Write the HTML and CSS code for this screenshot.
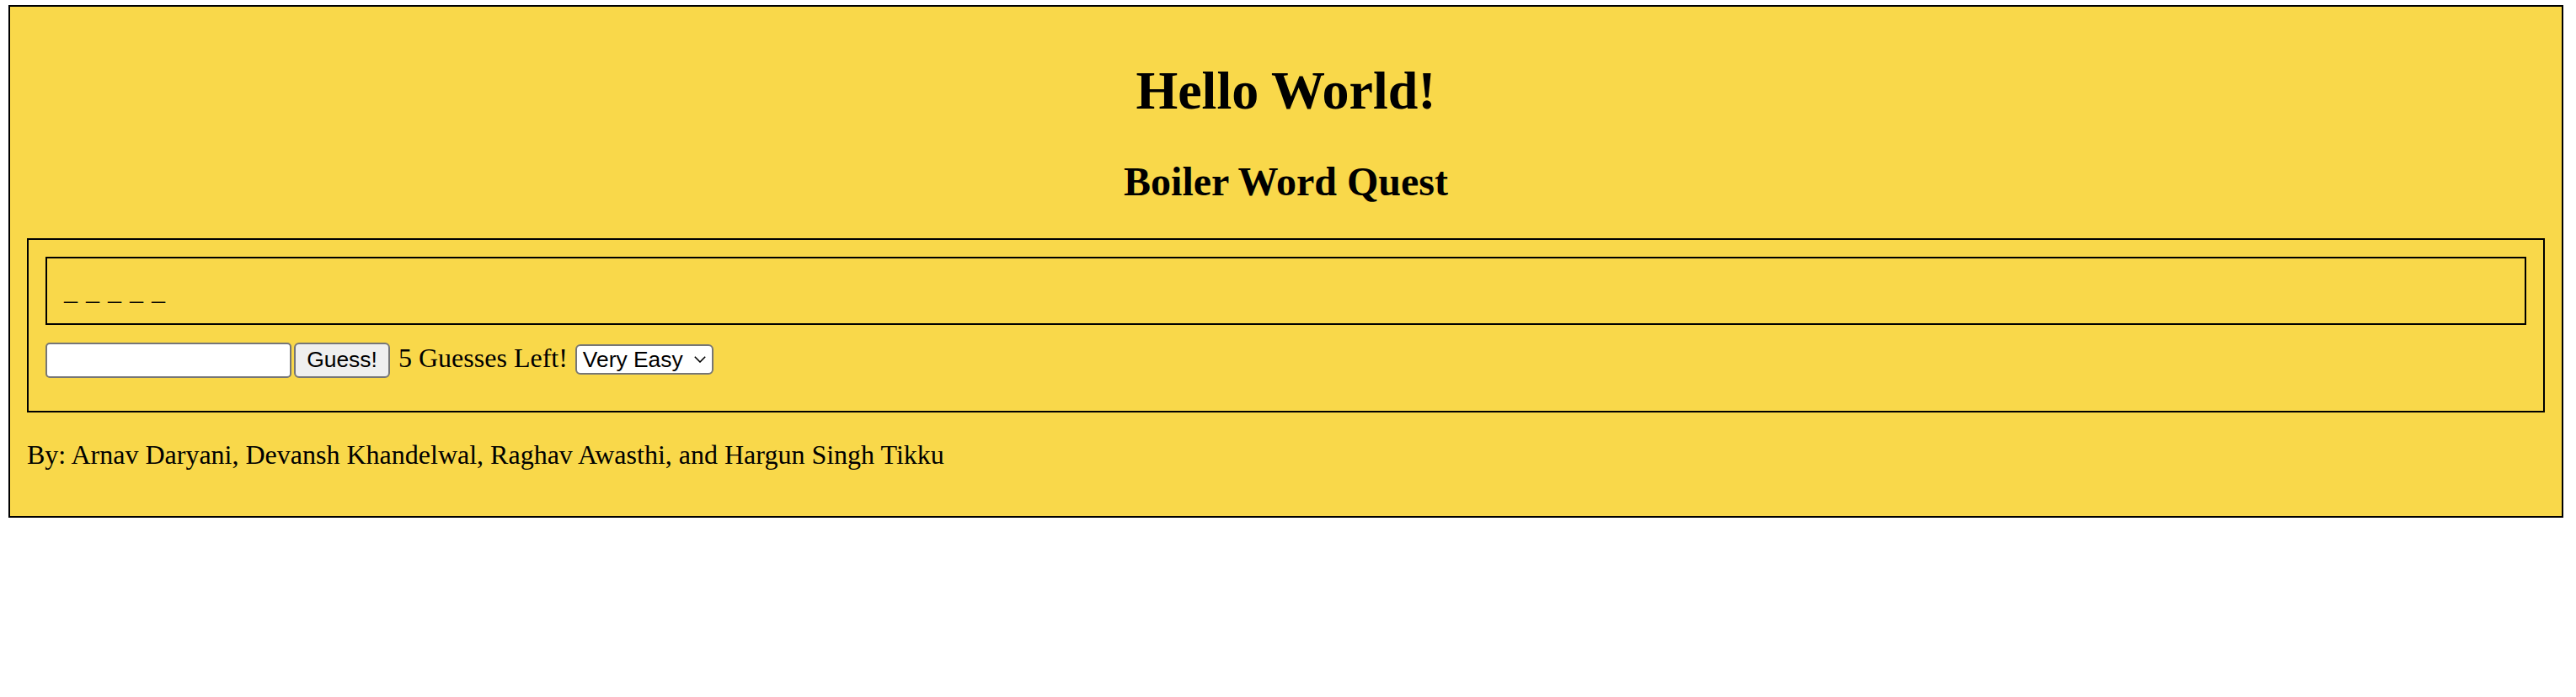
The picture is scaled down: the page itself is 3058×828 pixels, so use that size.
FILE: index.html
```html
<!DOCTYPE html>
<html lang="en">
<head>
<meta charset="utf-8">
<title>Boiler Word Quest</title>
<link rel="stylesheet" href="styles.css">
</head>
<body>
<div class="page">
  <h1 class="title">Hello World!</h1>
  <h2 class="subtitle">Boiler Word Quest</h2>
  <div class="game">
    <div class="word">_ _ _ _ _</div>
    <div class="controls">
      <input class="guess-input" type="text">
      <button class="guess-btn" type="button">Guess!</button>
      <span class="guesses">5 Guesses Left!</span>
      <div class="select">
        <span class="select-text">Very Easy</span>
        <svg class="chev" width="14" height="8" viewBox="0 0 14 8"><polyline points="0.8,0.8 7,7 13.2,0.8" fill="none" stroke="#000" stroke-width="1.6"/></svg>
      </div>
    </div>
  </div>
  <p class="credits">By: Arnav Daryani, Devansh Khandelwal, Raghav Awasthi, and Hargun Singh Tikku</p>
</div>
</body>
</html>
```
FILE: styles.css
```css
html, body {
  margin: 0;
  padding: 0;
  background: #ffffff;
}
body {
  font-family: "Liberation Serif", "Times New Roman", serif;
  font-size: 32px;
  color: #000;
}
.page {
  margin: 6px 15px 0 10px;
  border: 2px solid #000;
  padding: 20px;
  background: #f9d84a;
}
.title {
  font-size: 64px;
  font-weight: bold;
  text-align: center;
  margin: 42.88px 0;
}
.subtitle {
  font-size: 48px;
  font-weight: bold;
  text-align: center;
  margin: 39.84px 0;
}
.game {
  border: 2px solid #000;
  padding: 20px;
}
.word {
  border: 2px solid #000;
  padding: 20px;
  word-spacing: 2px;
}
.controls {
  display: flex;
  align-items: flex-start;
  margin-top: 21px;
  margin-bottom: 19px;
}
.guess-input {
  box-sizing: border-box;
  width: 292px;
  height: 42px;
  margin: 0;
  border: 2px solid #767676;
  border-radius: 5px;
  background: #fff;
  padding: 0 4px;
  font-family: "Liberation Sans", Arial, sans-serif;
  font-size: 26px;
}
.guess-btn {
  box-sizing: border-box;
  width: 114px;
  height: 42px;
  margin: 0 0 0 3px;
  border: 2px solid #767676;
  border-radius: 6px;
  background: #efefef;
  color: #000;
  padding: 0;
  font-family: "Liberation Sans", Arial, sans-serif;
  font-size: 26.4px;
}
.guesses {
  margin: 0 9px 0 10px;
}
.select {
  box-sizing: border-box;
  width: 164px;
  height: 36px;
  margin-top: 2px;
  border: 2px solid #767676;
  border-radius: 6px;
  background: #fff;
  display: flex;
  align-items: center;
  justify-content: space-between;
  padding: 0 7px;
  font-family: "Liberation Sans", Arial, sans-serif;
  font-size: 26.4px;
}
.select-text {
  line-height: 32px;
}
.chev {
  display: block;
  margin-top: 1px;
}
.credits {
  margin: 32px 0 34px;
}
```
